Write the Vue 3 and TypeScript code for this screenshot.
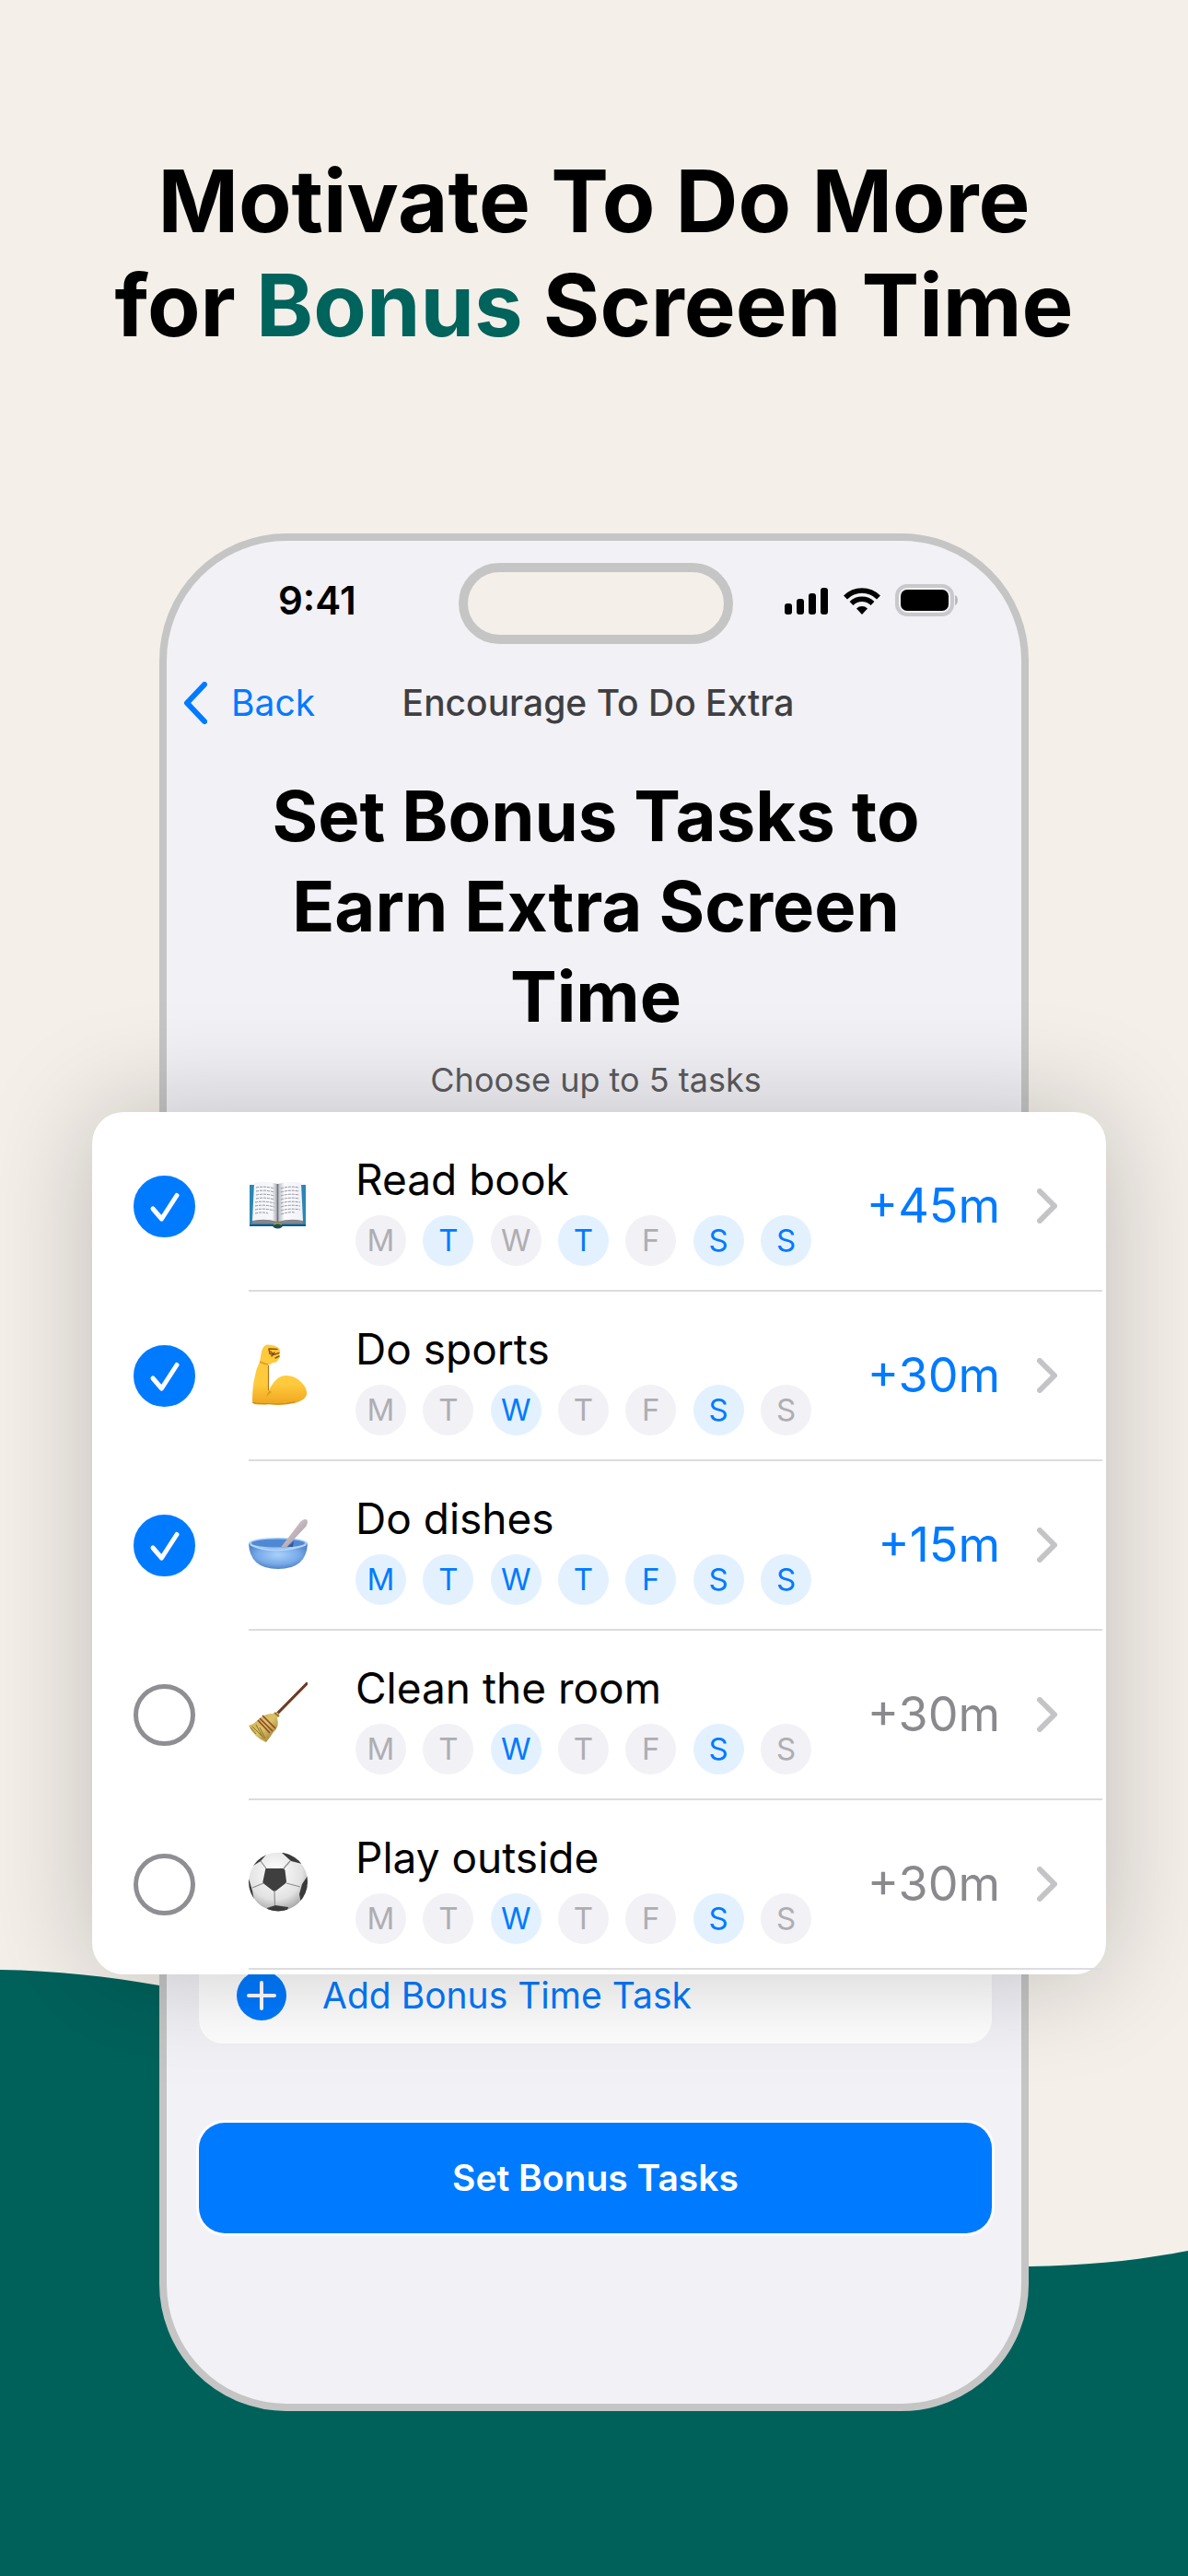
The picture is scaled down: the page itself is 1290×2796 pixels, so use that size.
<script setup lang="ts">
import { reactive } from 'vue'

type Icon = 'book' | 'muscle' | 'bowl' | 'broom' | 'ball'

interface Task {
  id: string
  title: string
  icon: Icon
  bonus: string
  done: boolean
  days: number[]
}

const dayLetters = ['M', 'T', 'W', 'T', 'F', 'S', 'S']

const tasks = reactive<Task[]>([
  { id: 'read', title: 'Read book', icon: 'book', bonus: '+45m', done: true, days: [1, 3, 5, 6] },
  { id: 'sports', title: 'Do sports', icon: 'muscle', bonus: '+30m', done: true, days: [2, 5] },
  { id: 'dishes', title: 'Do dishes', icon: 'bowl', bonus: '+15m', done: true, days: [0, 1, 2, 3, 4, 5, 6] },
  { id: 'clean', title: 'Clean the room', icon: 'broom', bonus: '+30m', done: false, days: [2, 5] },
  { id: 'play', title: 'Play outside', icon: 'ball', bonus: '+30m', done: false, days: [2, 5] },
])
</script>

<template>
  <main class="poster">
    <svg class="wave" viewBox="0 0 1290 658" preserveAspectRatio="none" aria-hidden="true">
      <path d="M0 0C62 1 116 7 173 17C480 70 760 322 1118 322C1184 321 1238 315 1290 305V658H0Z" />
    </svg>

    <h1 class="headline">Motivate To Do More<br />for <em>Bonus</em> Screen Time</h1>

    <section class="phone">
      <div class="status">
        <span class="clock">9:41</span>
        <span class="island"></span>
        <svg class="signals" viewBox="0 0 188 36" aria-hidden="true">
          <g fill="#000">
            <rect x="0" y="21" width="8" height="12" rx="3" />
            <rect x="13" y="16" width="8" height="17" rx="3" />
            <rect x="26" y="10" width="8" height="23" rx="3" />
            <rect x="39" y="4" width="8" height="29" rx="3" />
            <path d="M84 33l-6-6.500a8.500 8.500 0 0 1 12 0z" />
          </g>
          <g fill="none" stroke="#000" stroke-width="5.500">
            <path d="M72.500 21a16.500 16.500 0 0 1 23 0" />
            <path d="M66 14.500a25.500 25.500 0 0 1 36 0" />
          </g>
          <rect x="122" y="2" width="60" height="31" rx="11" fill="none" stroke="#c8c8cd" stroke-width="4" />
          <rect x="126" y="6" width="52" height="23" rx="7" fill="#000" />
          <path d="M185 12c4 1 4 10 0 11z" fill="#b9b9be" />
        </svg>
      </div>

      <nav class="nav">
        <button class="back" type="button">
          <svg viewBox="0 0 26 46" aria-hidden="true"><path d="M23 3L4 23l19 20" /></svg>
          Back
        </button>
        <span class="nav-title">Encourage To Do Extra</span>
      </nav>

      <h2 class="title">Set Bonus Tasks to<br />Earn Extra Screen<br />Time</h2>
      <p class="hint">Choose up to 5 tasks</p>

      <ul class="card">
        <li v-for="task in tasks" :key="task.id" class="row">
          <label class="tick">
            <input v-model="task.done" type="checkbox" :aria-label="task.title" />
            <svg v-if="task.done" viewBox="0 0 67 67" aria-hidden="true"><path d="M21 36l9.500 11L47 21.500" /></svg>
          </label>
          <div class="body">
            <svg class="icon" viewBox="0 0 64 70" aria-hidden="true">
              <template v-if="task.icon === 'book'">
                <defs>
                  <linearGradient id="pageL" x1="0" x2="1"><stop offset="0" stop-color="#f4f5fa" /><stop offset=".8" stop-color="#f6f7fb" /><stop offset="1" stop-color="#a9abb2" /></linearGradient>
                  <linearGradient id="pageR" x1="0" x2="1"><stop offset="0" stop-color="#b4b6be" /><stop offset=".25" stop-color="#fbfbff" /><stop offset="1" stop-color="#f0f1f7" /></linearGradient>
                </defs>
                <path d="M1 12h61v45H36q-4 3-9 0H1z" fill="#2b86b4" />
                <path d="M1 55h61v2H36q-4 3-9 0H1z" fill="#17597d" />
                <path d="M4 50l2-4h51l2 4v4H37q-5 3-10 0H4z" fill="#85878c" />
                <path d="M6 10q14-3 25 1v41q-12-4-27-1z" fill="url(#pageL)" />
                <path d="M32 11q12-4 25-1l2 41q-14-3-27 1z" fill="url(#pageR)" />
                <path d="M31.500 11v42" stroke="#6f7178" stroke-width="1.500" />
                <g stroke="#8f9199" stroke-width="1" fill="none" stroke-dasharray="3 1">
                  <path d="M8 15q10-2 20 1M8 19q10-2 20 1M8 23q10-2 20 1M8 27q10-2 20 1M7 31q10-2 21 1M7 35q10-2 21 1M7 39q10-2 21 1M7 43q8-2 14 0" />
                  <path d="M35 16q9-3 19-1M35 20q9-3 20-1M35 24q9-3 20-1M35 28q9-3 20-1M35 32q9-3 21-1M35 36q9-3 21-1M35 40q9-3 21-1M35 44q9-3 15-2" />
                </g>
                <ellipse cx="31.500" cy="56" rx="5.500" ry="3.500" fill="#164f63" />
                <path d="M27 55q4-3 9 0" stroke="#b49b2f" stroke-width="2" fill="none" />
              </template>

              <template v-else-if="task.icon === 'muscle'">
                <defs>
                  <linearGradient id="skin" x1="0" y1="0" x2="0" y2="1"><stop offset="0" stop-color="#ffc93a" /><stop offset=".65" stop-color="#ffcb3d" /><stop offset="1" stop-color="#eda41f" /></linearGradient>
                </defs>
                <path d="M14 9Q16 2 20 1.500q8 0 13 4 2 3 0 6 2 3-.500 6-2 4-6 3.500-3 2-5 2.500-1 17 .500 28Q29 35 41 35q9 0 16 7 7 7 6 14-2 6-13 9-13 3-28 1-8 1-16 0-2-1-2-4Q4 46 7 35q1-7 5-15z" fill="url(#skin)" />
                <path d="M22 51l3 2-6 5q2-4 3-7z" fill="#e09a1c" />
                <path d="M21.500 24v27" stroke="#b8721a" stroke-width="1.200" fill="none" />
                <path d="M22 6l9 .500M22 6.500l1 5 4 1 6-2M24 9l3 3M25 14l3-4M29 16l4-2" stroke="#8c5310" stroke-width="1.500" fill="none" stroke-linecap="round" />
                <path d="M12 20q4 2 9 3" stroke="#e0981d" stroke-width="1.500" fill="none" />
                <path d="M4 64q6 2 17 1.500 16 2 29-2" stroke="#cf8619" stroke-width="1.200" fill="none" />
              </template>

              <template v-else-if="task.icon === 'bowl'">
                <defs>
                  <radialGradient id="bowlFill" cx=".5" cy=".45" r=".6"><stop offset="0" stop-color="#a9d0fa" /><stop offset=".6" stop-color="#77aae8" /><stop offset="1" stop-color="#4878bd" /></radialGradient>
                  <linearGradient id="spoon" x1="0" y1="0" x2="1" y2="1"><stop offset="0" stop-color="#dcdadd" /><stop offset="1" stop-color="#a58f98" /></linearGradient>
                </defs>
                <path d="M0 33q1 28 32 28t32-28z" fill="url(#bowlFill)" />
                <ellipse cx="32" cy="33" rx="32" ry="6" fill="#a5cbf7" />
                <ellipse cx="32" cy="33" rx="29" ry="4.500" fill="#5089d3" />
                <path d="M42 37l7-6-1 6z" fill="#2f5a9c" />
                <path d="M35 37.500L56 10q4-4 7-2.500 2 2-.500 7L41 37.500z" fill="url(#spoon)" />
                <path d="M2 35q14 6 30 5.500T62 35" stroke="#b8d8fb" stroke-width="1.500" fill="none" />
              </template>

              <template v-else-if="task.icon === 'broom'">
                <defs>
                  <linearGradient id="straw" x1="0" y1="0" x2="1" y2="1"><stop offset="0" stop-color="#c9ab4e" /><stop offset=".5" stop-color="#dcc368" /><stop offset="1" stop-color="#8c6a24" /></linearGradient>
                </defs>
                <path d="M31 34L63 1.500" stroke="#6b3c22" stroke-width="3.200" stroke-linecap="round" />
                <path d="M28 33q3-2 5 2l-2 4q3 9-4 15-4 6-8 11Q6 60 0 47q6-2 10-6 8-8 17-7z" fill="url(#straw)" />
                <path d="M15 36l14 14M12 39l14 14M10 41l13 14" stroke="#8e4a28" stroke-width="1.700" />
                <path d="M4 48l10 10M8 46l8 15M2 49l6 7M12 49l6 12" stroke="#8c702c" stroke-width="1" />
                <path d="M28 33l5 4" stroke="#93762f" stroke-width="2" />
              </template>

              <template v-else>
                <defs>
                  <radialGradient id="ballFill" cx=".45" cy=".35" r=".65"><stop offset="0" stop-color="#fff" /><stop offset=".7" stop-color="#e2e2e2" /><stop offset="1" stop-color="#a9a9a9" /></radialGradient>
                  <clipPath id="ballClip"><circle cx="32" cy="32.500" r="32" /></clipPath>
                </defs>
                <g clip-path="url(#ballClip)">
                  <circle cx="32" cy="32.500" r="32" fill="url(#ballFill)" />
                  <g stroke="#8d8d8d" stroke-width="1.200" fill="none">
                    <path d="M19 18l-6-8M38 18l7-8M41 34l15 4M28 43l.500 15M16 34L4 39" />
                  </g>
                  <path d="M19 18h18q2 0 2.500 2l1.500 12q0 2-2 3l-9 7q-2 1.500-4 0l-9-7q-2-1-1.500-3L18 20q0-2 1-2z" fill="#3f3f40" />
                  <path d="M36 1l10 9 12 3L50 2zM5 15l8-5 8-9L8 4zM64 26l-6 9-3 11 2 10 9-12zM0 29l1 3 3 10 2 11-8-8zM20 61l9-3 14 2-2 8H24z" fill="#3a3a3b" />
                </g>
              </template>
            </svg>

            <div class="info">
              <h3 class="name">{{ task.title }}</h3>
              <div class="days">
                <span
                  v-for="(letter, index) in dayLetters"
                  :key="index"
                  class="day"
                  :class="{ on: task.days.includes(index) }"
                >{{ letter }}</span>
              </div>
            </div>

            <button class="bonus" :class="{ active: task.done }" type="button">
              {{ task.bonus }}
              <svg viewBox="0 0 22 38" aria-hidden="true"><path d="M3 3l16 16L3 35" /></svg>
            </button>
          </div>
        </li>
      </ul>

      <button class="add" type="button">
        <svg viewBox="0 0 54 54" aria-hidden="true">
          <circle cx="27" cy="27" r="27" fill="#007aff" />
          <path d="M27 13v28M13 27h28" stroke="#fff" stroke-width="4" stroke-linecap="round" />
        </svg>
        Add Bonus Time Task
      </button>

      <button class="submit" type="button">Set Bonus Tasks</button>
    </section>
  </main>
</template>

<style>
body {
  margin: 0;
  background: #f4efe9;
}
</style>

<style scoped>
.poster {
  position: relative;
  box-sizing: border-box;
  min-height: 100vh;
  padding: 162px 173px 179px;
  overflow: hidden;
  background: #f4efe9;
  color: #000;
  font-family: Inter, 'Liberation Sans', sans-serif;
}

button {
  padding: 0;
  border: 0;
  background: none;
  font: inherit;
  color: inherit;
}

svg {
  display: block;
  flex: none;
}

.wave {
  position: absolute;
  left: 0;
  bottom: 0;
  width: 100%;
  height: 658px;
  fill: #00615b;
}

.headline {
  position: relative;
  margin: 0 -100px;
  font-size: 94px;
  line-height: 113px;
  font-weight: 700;
  text-align: center;
}

.headline em {
  font-style: normal;
  color: #00635c;
}

.phone {
  position: relative;
  margin-top: 191px;
  padding-bottom: 185px;
  border: 8px solid #c5c5c5;
  border-radius: 138px;
  background: #f2f1f6;
}

.status {
  display: grid;
  grid-template-columns: 1fr 298px 1fr;
  align-items: center;
  padding: 24px 0 0 4px;
}

.clock {
  padding: 0 0 6px 117px;
  font-size: 42px;
  line-height: 48px;
  font-weight: 600;
}

.island {
  box-sizing: border-box;
  height: 88px;
  border: 10px solid #c5c5c5;
  border-radius: 44px;
  background: #f4efe9;
}

.signals {
  width: 188px;
  height: 36px;
  margin: 0 0 6px 56px;
}

.nav {
  display: grid;
  grid-template-columns: 1fr auto 1fr;
  align-items: center;
  margin-top: 40px;
  padding-left: 9px;
  font-size: 39px;
  line-height: 48px;
}

.back {
  display: flex;
  align-items: center;
  gap: 26px;
  padding-left: 9px;
  color: #007aff;
}

.back svg {
  width: 26px;
  height: 46px;
  fill: none;
  stroke: #007aff;
  stroke-width: 6px;
  stroke-linecap: round;
  stroke-linejoin: round;
}

.nav-title {
  font-weight: 500;
  color: #3f3f42;
}

.title {
  margin: 49px 0 0;
  padding-left: 4px;
  font-size: 76px;
  line-height: 98px;
  font-weight: 700;
  text-align: center;
}

.hint {
  margin: 18px 0 0;
  padding-left: 4px;
  font-size: 36px;
  line-height: 48px;
  text-align: center;
  color: #5c5c60;
}

.card {
  position: relative;
  z-index: 1;
  margin: 11px -92px 0 -81px;
  padding: 11px 0 5px;
  border-radius: 34px;
  background: #fff;
  box-shadow: 0 0 120px rgba(0, 0, 0, 0.22);
  list-style: none;
}

.row {
  display: flex;
  align-items: stretch;
  gap: 58px;
  padding: 0 4px 0 45px;
}

.tick {
  display: grid;
  flex: none;
  align-content: center;
  width: 67px;
  padding-bottom: 2px;
}

.tick input,
.tick svg {
  grid-area: 1 / 1;
  width: 67px;
  height: 67px;
}

.tick input {
  appearance: none;
  box-sizing: border-box;
  margin: 0;
  border: 5px solid #8e8e93;
  border-radius: 50%;
}

.tick input:checked {
  border-color: #007aff;
  background: #007aff;
}

.tick svg {
  fill: none;
  stroke: #fff;
  stroke-width: 5px;
  stroke-linecap: round;
  stroke-linejoin: round;
  pointer-events: none;
}

.body {
  display: flex;
  flex: 1;
  align-items: center;
  box-sizing: border-box;
  height: 184px;
  padding-right: 49px;
  border-bottom: 2px solid #dcdcdf;
}

.icon {
  width: 64px;
  height: 70px;
}

.info {
  width: 495px;
  margin-left: 52px;
  padding-top: 8px;
}

.name {
  margin: 0 0 11px;
  font-size: 46px;
  line-height: 56px;
  font-weight: 400;
  white-space: nowrap;
}

.days {
  display: flex;
  justify-content: space-between;
}

.day {
  width: 55px;
  border-radius: 50%;
  background: #f2f1f6;
  color: #aeaeb2;
  font-size: 33px;
  line-height: 55px;
  text-align: center;
}

.day.on {
  background: #e3f1ff;
  color: #007aff;
}

.bonus {
  display: flex;
  align-items: center;
  gap: 40px;
  margin-left: auto;
  font-size: 52px;
  line-height: 60px;
  color: #8a8a8e;
}

.bonus.active {
  color: #007aff;
}

.bonus svg {
  width: 22px;
  height: 38px;
  fill: none;
  stroke: #c4c4c6;
  stroke-width: 6px;
  stroke-linecap: round;
  stroke-linejoin: round;
}

.add {
  display: flex;
  align-items: center;
  gap: 39px;
  box-sizing: border-box;
  width: calc(100% - 67px);
  height: 104px;
  margin: -29px 32px 0 35px;
  padding-left: 41px;
  border-radius: 26px;
  background: #fff;
  font-size: 39px;
  line-height: 48px;
  color: #007aff;
}

.add svg {
  width: 54px;
  height: 54px;
}

.submit {
  display: block;
  width: calc(100% - 67px);
  height: 120px;
  margin: 86px 32px 0 35px;
  border-radius: 28px;
  background: #007aff;
  box-shadow: 0 0 0 3px #fdfcfb;
  font-size: 39px;
  line-height: 48px;
  font-weight: 600;
  color: #fff;
}
</style>
